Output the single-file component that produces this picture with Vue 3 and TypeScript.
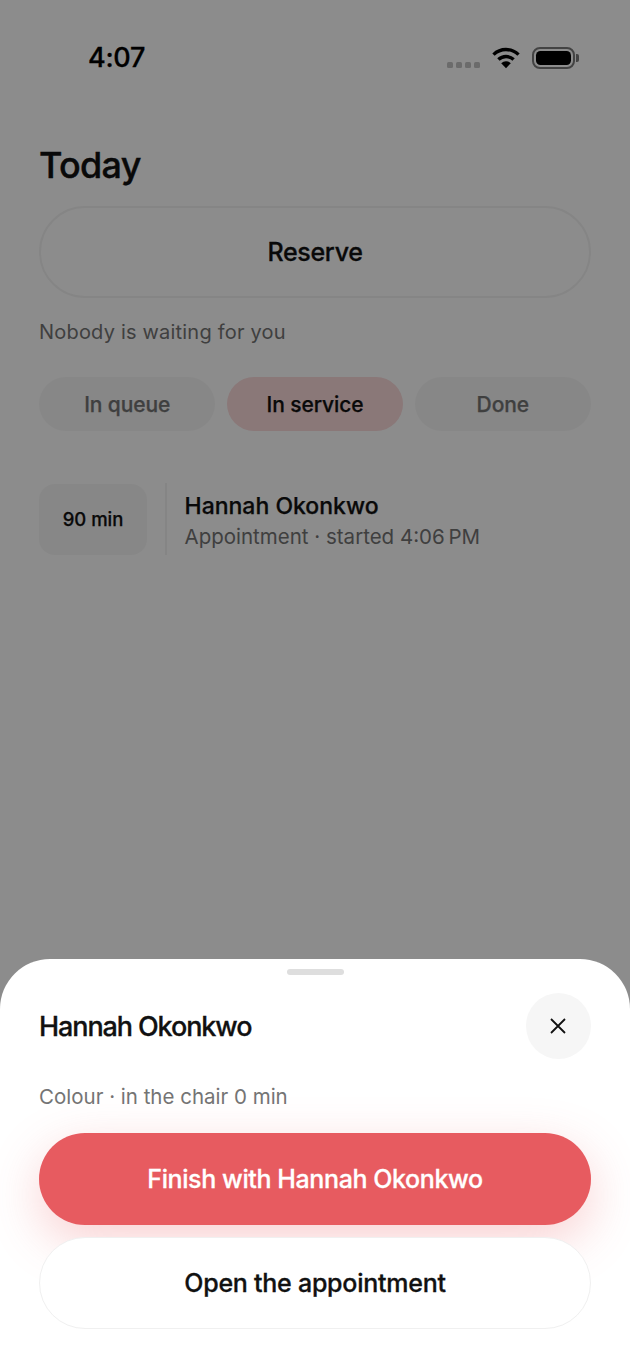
<script setup lang="ts">
const chips = [
  { label: 'In queue', active: false },
  { label: 'In service', active: true },
  { label: 'Done', active: false },
]
</script>

<template>
  <div class="screen">
    <div class="status_bar">
      <span class="time">4:07</span>
      <div class="status_icons">
        <div class="signal"><i></i><i></i><i></i><i></i></div>
        <svg class="wifi" width="28" height="22" viewBox="0 0 28 22">
          <path d="M1.5 7.6A18 18 0 0 1 26.5 7.6" fill="none" stroke="#000" stroke-width="3.4" />
          <path d="M6.4 12.6A11 11 0 0 1 21.6 12.6" fill="none" stroke="#000" stroke-width="3.4" />
          <path d="M9.2 16.2A7 7 0 0 1 18.8 16.2L14 21.2Z" fill="#000" />
        </svg>
        <div class="battery"><div class="battery_fill"></div></div>
        <div class="battery_cap"></div>
      </div>
    </div>

    <main class="content">
      <h1 class="title">Today</h1>
      <button class="reserve">Reserve</button>
      <p class="waiting">Nobody is waiting for you</p>

      <div class="chips">
        <div v-for="chip in chips" :key="chip.label" class="chip" :class="{ active: chip.active }">
          {{ chip.label }}
        </div>
      </div>

      <div class="row">
        <div class="duration">90 min</div>
        <div class="divider"></div>
        <div class="row_text">
          <div class="row_name">Hannah Okonkwo</div>
          <div class="row_meta">Appointment · started 4:06&#8201;PM</div>
        </div>
      </div>
    </main>

    <div class="scrim"></div>

    <section class="sheet">
      <div class="handle"></div>
      <div class="sheet_header">
        <h2 class="sheet_title">Hannah Okonkwo</h2>
        <button class="close" aria-label="Close">
          <svg width="18" height="18" viewBox="0 0 18 18">
            <path d="M1 2L15 16M15 2L1 16" stroke="#111" stroke-width="1.8" fill="none" />
          </svg>
        </button>
      </div>
      <p class="sheet_meta">Colour · in the chair 0 min</p>
      <button class="finish">Finish with Hannah Okonkwo</button>
      <button class="open">Open the appointment</button>
    </section>
  </div>
</template>

<style scoped>
.screen {
  position: relative;
  width: 630px;
  height: 1368px;
  overflow: hidden;
  background: #ffffff;
  color: #111111;
  font-family: Inter, 'Liberation Sans', sans-serif;
}

.status_bar {
  height: 114px;
  box-sizing: border-box;
  padding: 41px 51px 0 88px;
  display: flex;
  justify-content: space-between;
  align-items: flex-start;
}

.time {
  font-size: 27px;
  line-height: 33px;
  font-weight: 500;
  -webkit-text-stroke: 0.3px currentColor;
  color: #000000;
  letter-spacing: -0.3px;
}

.status_icons {
  display: flex;
  align-items: center;
  height: 33px;
}

.signal {
  display: flex;
  gap: 3px;
  margin: 15px 12px 0 0;
}

.signal i {
  width: 6px;
  height: 6px;
  border-radius: 1.5px;
  background: #c4c4c4;
}

.wifi {
  margin-right: 12px;
}

.battery {
  width: 43px;
  height: 22px;
  box-sizing: border-box;
  padding: 2px;
  border: 2px solid #7a7a7a;
  border-radius: 8px;
}

.battery_fill {
  width: 100%;
  height: 100%;
  background: #000000;
  border-radius: 4.5px;
}

.battery_cap {
  width: 3px;
  height: 8px;
  margin-left: 1px;
  border-radius: 0 2px 2px 0;
  background: #7a7a7a;
}

.content {
  padding: 0 39px;
  display: flex;
  flex-direction: column;
}

.title {
  margin: 28px 0 18px;
  font-size: 36px;
  line-height: 46px;
  font-weight: 500;
  -webkit-text-stroke: 0.4px currentColor;
  letter-spacing: -0.7px;
}

.reserve {
  height: 92px;
  border: 2px solid #f3f3f3;
  border-radius: 46px;
  background: #ffffff;
  color: #111111;
  font: 500 25px Inter, sans-serif;
  -webkit-text-stroke: 0.3px currentColor;
  letter-spacing: -0.3px;
}

.waiting {
  margin: 21px 0 32px;
  font-size: 20px;
  line-height: 26px;
  letter-spacing: 0.2px;
  color: #747474;
}

.chips {
  display: flex;
  gap: 11.5px;
}

.chip {
  flex: 1;
  height: 54px;
  border-radius: 27px;
  background: #f6f6f6;
  color: #747474;
  font-size: 21px;
  font-weight: 500;
  -webkit-text-stroke: 0.25px currentColor;
  letter-spacing: -0.1px;
  display: flex;
  align-items: center;
  justify-content: center;
}

.chip.active {
  background: #fbdadb;
  color: #111111;
}

.row {
  margin-top: 52px;
  display: flex;
  align-items: center;
}

.duration {
  width: 108px;
  height: 71px;
  border-radius: 16px;
  background: #f6f6f6;
  font-size: 18.5px;
  font-weight: 500;
  -webkit-text-stroke: 0.25px currentColor;
  display: flex;
  align-items: center;
  justify-content: center;
}

.divider {
  width: 1.5px;
  height: 72px;
  margin: 0 18px;
  background: #f3f3f3;
}

.row_name {
  margin-top: 4px;
  font-size: 23px;
  line-height: 30px;
  font-weight: 500;
  -webkit-text-stroke: 0.25px currentColor;
}

.row_meta {
  margin-top: 1px;
  font-size: 20.5px;
  line-height: 30px;
  color: #747474;
}

.scrim {
  position: absolute;
  inset: 0;
  background: rgba(0, 0, 0, 0.45);
}

.sheet {
  position: absolute;
  left: 0;
  right: 0;
  bottom: 0;
  height: 409px;
  box-sizing: border-box;
  padding: 10px 39px 0;
  display: flex;
  flex-direction: column;
  background: #ffffff;
  border-radius: 50px 50px 0 0;
}

.handle {
  width: 57px;
  height: 6px;
  align-self: center;
  border-radius: 3px;
  background: #dedede;
}

.sheet_header {
  margin-top: 18px;
  display: flex;
  align-items: center;
  justify-content: space-between;
}

.sheet_title {
  margin: 0;
  font-size: 27px;
  font-weight: 500;
  -webkit-text-stroke: 0.3px currentColor;
  letter-spacing: -1.1px;
}

.close {
  width: 65px;
  height: 66px;
  padding: 0;
  border: none;
  border-radius: 50%;
  background: #f6f6f6;
  display: flex;
  align-items: center;
  justify-content: center;
}

.sheet_meta {
  margin: 25px 0 23px;
  font-size: 20.5px;
  line-height: 26px;
  color: #747474;
}

.finish {
  height: 92px;
  border: none;
  border-radius: 46px;
  background: #e75b60;
  color: #ffffff;
  font: 500 25px Inter, sans-serif;
  -webkit-text-stroke: 0.3px currentColor;
  letter-spacing: -0.4px;
  box-shadow: 0 16px 50px rgba(233, 91, 95, 0.28);
}

.open {
  height: 92px;
  margin-top: 12px;
  border: 1.5px solid #f0f0f0;
  border-radius: 46px;
  background: #ffffff;
  color: #111111;
  font: 500 25px Inter, sans-serif;
  -webkit-text-stroke: 0.3px currentColor;
  letter-spacing: -0.25px;
}
</style>
